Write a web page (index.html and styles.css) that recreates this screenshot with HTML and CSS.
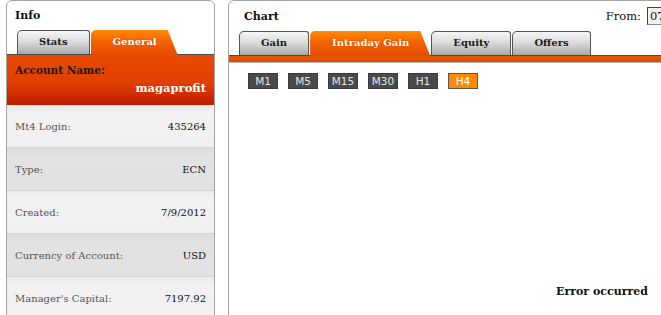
FILE: index.html
```html
<!DOCTYPE html>
<html>

<head>
  <meta charset="utf-8" />
  <title>Account</title>
  <link rel="stylesheet" href="styles.css">
</head>

<body>
  <div class="layout">
    <div class="panel panel-info">
      <div class="panel-title">Info</div>
      <ul class="tabs">
        <li class="tab">Stats</li>
        <li class="tab active">General</li>
      </ul>
      <div class="account">
        <div class="account-label">Account Name:</div>
        <div class="account-name">magaprofit</div>
      </div>
      <div class="row"><span class="label">Mt4 Login:</span><span class="value">435264</span></div>
      <div class="row alt"><span class="label">Type:</span><span class="value">ECN</span></div>
      <div class="row"><span class="label">Created:</span><span class="value">7/9/2012</span></div>
      <div class="row alt"><span class="label">Currency of Account:</span><span class="value">USD</span></div>
      <div class="row"><span class="label">Manager's Capital:</span><span class="value">7197.92</span></div>
    </div>

    <div class="panel panel-chart">
      <div class="panel-title chart-head">
        <span>Chart</span>
        <label class="from">From: <input type="text" value="07/09/2012" /></label>
      </div>
      <ul class="tabs">
        <li class="tab">Gain</li>
        <li class="tab active">Intraday Gain</li>
        <li class="tab">Equity</li>
        <li class="tab">Offers</li>
      </ul>
      <div class="tab-bar"></div>
      <div class="periods">
        <span class="period">M1</span>
        <span class="period">M5</span>
        <span class="period">M15</span>
        <span class="period">M30</span>
        <span class="period">H1</span>
        <span class="period current">H4</span>
      </div>
      <div class="chart-area">
        <div class="chart-status">Error occurred</div>
      </div>
    </div>
  </div>
</body>

</html>
```

FILE: styles.css
```css
body {
  margin: 0;
  padding: 0 0 0 6px;
  background-color: #fff;
  font-family: "DejaVu Serif", serif;
  color: #111;
  overflow: hidden;
}

.layout {
  display: flex;
  gap: 13px;
  align-items: flex-start;
}

.panel {
  border: 1px solid #a4a4a4;
  border-radius: 6px 6px 0 0;
  height: 340px;
  flex: none;
}

.panel-info {
  width: 207px;
}

.panel-chart {
  width: 505px;
}

.panel-title {
  height: 29px;
  line-height: 29px;
  padding-left: 8px;
  font-size: 11px;
  font-weight: bold;
}

.chart-head {
  display: flex;
  justify-content: space-between;
  align-items: center;
  height: 30px;
  padding-left: 15px;
  padding-right: 15px;
}

.from {
  font-weight: normal;
  font-size: 11.5px;
  display: flex;
  align-items: center;
  gap: 6px;
}

.from input {
  width: 66px;
  height: 14px;
  margin: 0;
  padding: 1px 2px;
  border: 1px solid #888;
  border-top-color: #444;
  border-left-color: #444;
  background-color: #f2f2ee;
  font-family: "DejaVu Serif", serif;
  font-size: 11.5px;
  color: #111;
}

.tabs {
  list-style: none;
  margin: 0 0 0 10px;
  padding: 0;
  display: flex;
  gap: 1px;
  height: 24px;
  position: relative;
  z-index: 1;
}

.tab {
  height: 23px;
  line-height: 21px;
  padding: 0 21px;
  border: 1px solid #555;
  border-bottom: none;
  border-radius: 5px 3px 0 0;
  background: linear-gradient(#f6f6f6, #dcdcdc 45%, #a9a9a9);
  font-size: 10px;
  font-weight: bold;
  color: #1a1a1a;
}

.tab.active {
  height: 25px;
  line-height: 23px;
  border: none;
  padding: 0 21px 0 22px;
  border-radius: 5px 0 0 0;
  background: linear-gradient(#ff8a00, #f26400 45%, #e44a00);
  color: #fff;
  text-shadow: 0 0 1px #b33b00;
  clip-path: polygon(0 0, calc(100% - 10px) 0, 100% 100%, 0 100%);
}

.account {
  border-top: 1px solid #4a4a4a;
  height: 51px;
  padding: 7px 8px 0;
  box-sizing: border-box;
  background: linear-gradient(#ea4a00, #e04000 55%, #c21c00);
  font-weight: bold;
}

.account-label {
  font-size: 10.5px;
  color: #1a1a1a;
  line-height: 16px;
}

.account-name {
  text-align: right;
  font-size: 11.5px;
  color: #fff;
  line-height: 20px;
}

.row {
  display: flex;
  justify-content: space-between;
  align-items: center;
  height: 42px;
  padding: 0 8px;
  border-bottom: 1px solid #d6d6d6;
  background: linear-gradient(#ebebeb, #f2f2f2 20%, #f0f0f0);
  font-size: 10px;
}

.row.alt {
  background: linear-gradient(#dcdcdc, #e3e3e3 20%, #e1e1e1);
}

.label {
  color: #555;
}

.value {
  color: #111;
  font-size: 10px;
}

.tab-bar {
  height: 6px;
  border-top: 1px solid #4a4a4a;
  border-bottom: 1px solid #b9b9b9;
  background: linear-gradient(#e85a00, #dd4f00);
}

.periods {
  display: flex;
  gap: 10px;
  padding: 10px 0 0 19px;
}

.period {
  width: 28px;
  height: 14px;
  line-height: 14px;
  border: 1px solid #3a3a3a;
  background-color: #4a4a4a;
  color: #e6e6e6;
  font-family: "DejaVu Sans", sans-serif;
  font-size: 10.5px;
  text-align: center;
}

.period.current {
  border-color: #555;
  background-color: #ff8a00;
  color: #fff;
}

.chart-area {
  height: 209px;
  display: flex;
  align-items: flex-end;
  justify-content: flex-end;
  padding-right: 86px;
}

.chart-status {
  font-size: 11px;
  font-weight: bold;
  color: #111;
}
```
